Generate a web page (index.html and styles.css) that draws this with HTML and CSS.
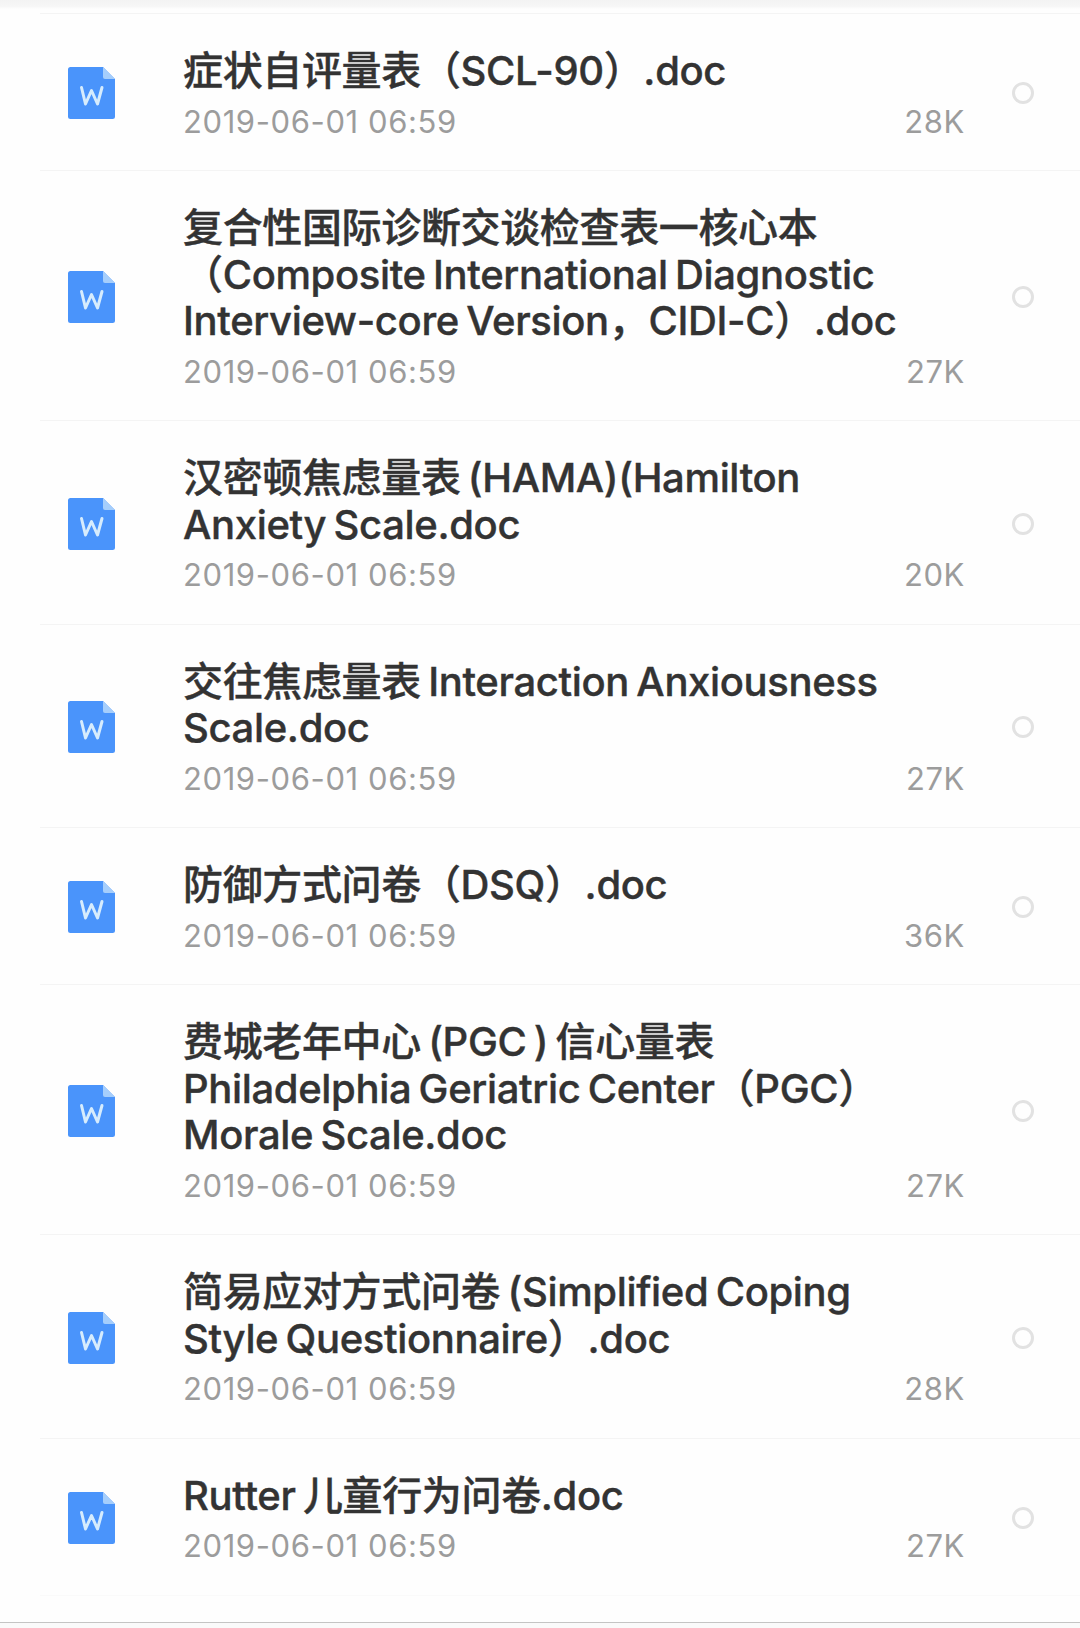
FILE: index.html
```html
<!DOCTYPE html>
<html>
    <head>
        <title>文件列表</title>
        <link rel="stylesheet" href="styles.css">
    </head>
    <body>
        <svg class="sprite" width="0" height="0">
            <symbol id="word-icon" viewBox="0 0 47 52">
                <path d="M2.5 0H35L47 12V49.5A2.5 2.5 0 0 1 44.5 52H2.5A2.5 2.5 0 0 1 0 49.5V2.5A2.5 2.5 0 0 1 2.5 0Z" fill="#4a94fb"/>
                <path d="M35 0L47 12H37A2 2 0 0 1 35 10Z" fill="#a5cefc"/>
                <path d="M13.5 20.5L17.5 37L23.5 23.5L29.5 37L34 20.5" fill="none" stroke="#d6ecfd" stroke-width="3" stroke-linecap="round" stroke-linejoin="round"/>
            </symbol>
        </svg>
        <div class="top-edge"></div>
        <ul class="file-list">
            <li class="file-row">
                <svg class="file-icon"><use href="#word-icon"/></svg>
                <div class="file-info">
                    <div class="file-name">症状自评量表（SCL-90）.doc</div>
                    <div class="file-meta"><span>2019-06-01 06:59</span><span>28K</span></div>
                </div>
                <span class="file-check"></span>
            </li>
            <li class="file-row">
                <svg class="file-icon"><use href="#word-icon"/></svg>
                <div class="file-info">
                    <div class="file-name">复合性国际诊断交谈检查表一核心本<br>（Composite International Diagnostic<br>Interview-core Version，CIDI-C）.doc</div>
                    <div class="file-meta"><span>2019-06-01 06:59</span><span>27K</span></div>
                </div>
                <span class="file-check"></span>
            </li>
            <li class="file-row">
                <svg class="file-icon"><use href="#word-icon"/></svg>
                <div class="file-info">
                    <div class="file-name">汉密顿焦虑量表 (HAMA)(Hamilton<br>Anxiety Scale.doc</div>
                    <div class="file-meta"><span>2019-06-01 06:59</span><span>20K</span></div>
                </div>
                <span class="file-check"></span>
            </li>
            <li class="file-row">
                <svg class="file-icon"><use href="#word-icon"/></svg>
                <div class="file-info">
                    <div class="file-name">交往焦虑量表 Interaction Anxiousness<br>Scale.doc</div>
                    <div class="file-meta"><span>2019-06-01 06:59</span><span>27K</span></div>
                </div>
                <span class="file-check"></span>
            </li>
            <li class="file-row">
                <svg class="file-icon"><use href="#word-icon"/></svg>
                <div class="file-info">
                    <div class="file-name">防御方式问卷（DSQ）.doc</div>
                    <div class="file-meta"><span>2019-06-01 06:59</span><span>36K</span></div>
                </div>
                <span class="file-check"></span>
            </li>
            <li class="file-row">
                <svg class="file-icon"><use href="#word-icon"/></svg>
                <div class="file-info">
                    <div class="file-name">费城老年中心 (PGC ) 信心量表<br>Philadelphia Geriatric Center（PGC）<br>Morale Scale.doc</div>
                    <div class="file-meta"><span>2019-06-01 06:59</span><span>27K</span></div>
                </div>
                <span class="file-check"></span>
            </li>
            <li class="file-row">
                <svg class="file-icon"><use href="#word-icon"/></svg>
                <div class="file-info">
                    <div class="file-name">简易应对方式问卷 (Simplified Coping<br>Style Questionnaire）.doc</div>
                    <div class="file-meta"><span>2019-06-01 06:59</span><span>28K</span></div>
                </div>
                <span class="file-check"></span>
            </li>
            <li class="file-row">
                <svg class="file-icon"><use href="#word-icon"/></svg>
                <div class="file-info">
                    <div class="file-name">Rutter 儿童行为问卷.doc</div>
                    <div class="file-meta"><span>2019-06-01 06:59</span><span>27K</span></div>
                </div>
                <span class="file-check"></span>
            </li>
        </ul>
        <div class="bottom-bar"></div>
    </body>
</html>
```

FILE: styles.css
```css
html,
body {
    height: 100%;
}

body {
    margin: 0;
    background-color: #fefefe;
    font-family: Inter, "Noto Sans CJK SC", sans-serif;
    display: flex;
    flex-direction: column;
    overflow: hidden;
}

.sprite {
    display: block;
}

.top-edge {
    height: 13px;
    background: linear-gradient(#f3f3f3, #f7f7f7 50%, #fefefe 70%);
}

.file-list {
    list-style: none;
    margin: 0;
    padding: 0 0 0 40px;
    flex: 1;
}

.file-row {
    display: flex;
    align-items: center;
    padding: 34px 0 29.5px;
    border-bottom: 1px solid #f4f4f4;
}

.file-row:first-child {
    border-top: 1px solid #f4f4f4;
}

.file-row:last-child {
    border-bottom-color: #fafafa;
}

.file-icon {
    width: 47px;
    height: 52px;
    margin: 0 68px 2px 28px;
    flex: none;
}

.file-info {
    width: 782px;
    flex: none;
}

.file-name {
    font-size: 40px;
    font-weight: 500;
    line-height: 46.5px;
    color: #333;
    white-space: nowrap;
    letter-spacing: -0.35px;
    word-spacing: -3px;
    -webkit-text-stroke: 0.4px #333;
}

.file-meta {
    display: flex;
    justify-content: space-between;
    font-size: 31px;
    line-height: 38px;
    letter-spacing: 0.6px;
    margin-top: 8px;
    color: #9c9c9c;
}

.file-check {
    width: 16px;
    height: 16px;
    margin: 0 0 2px 47px;
    border: 3px solid #e2e2e2;
    border-radius: 50%;
    flex: none;
}

.bottom-bar {
    height: 5px;
    background-color: #fafafa;
    border-top: 1px solid #c4c4c4;
    flex: none;
}
```
